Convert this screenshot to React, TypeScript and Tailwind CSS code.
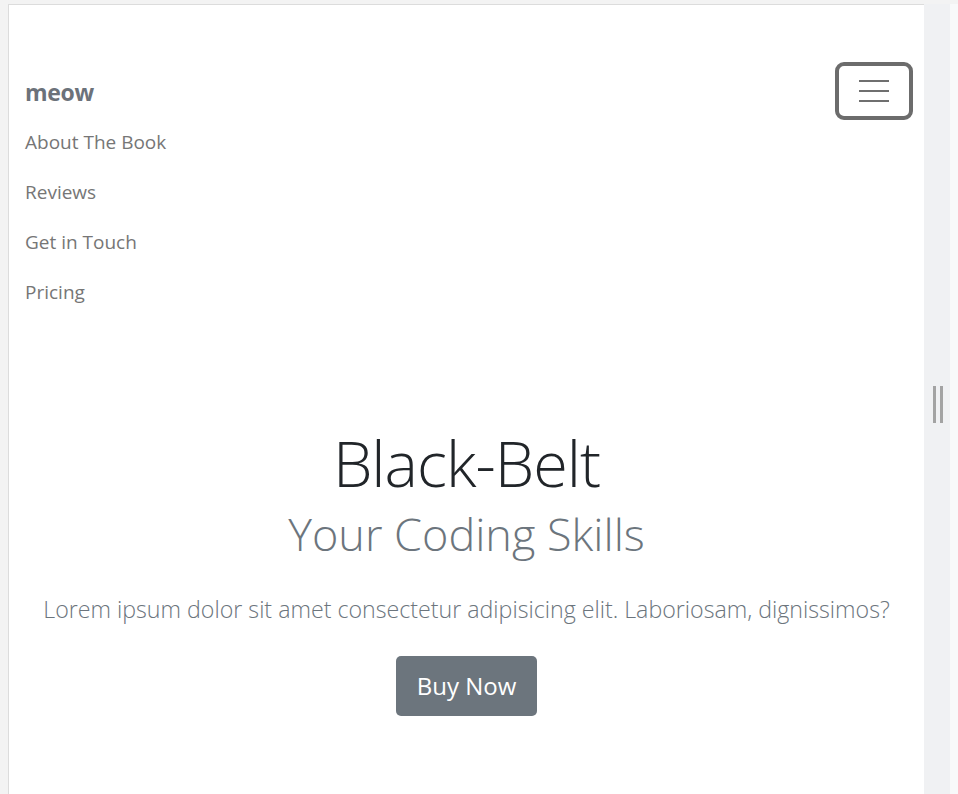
import { useState } from "react";

const links = ["About The Book", "Reviews", "Get in Touch", "Pricing"];

function Toggler() {
  return (
    <button className="flex h-[58px] w-[78px] items-center justify-center rounded-[9px] border-[4px] border-[#6c6c6c] bg-white">
      <span className="flex w-[30px] flex-col gap-[8px]">
        <span className="h-[2px] w-full bg-[#6f6f6f]" />
        <span className="h-[2px] w-full bg-[#6f6f6f]" />
        <span className="h-[2px] w-full bg-[#6f6f6f]" />
      </span>
    </button>
  );
}

export default function App() {
  const [open] = useState(true);

  return (
    <div className="flex h-[794px] overflow-hidden bg-[#f3f3f3] pl-2 pt-1 font-['Open_Sans',sans-serif]">
      <div className="flex flex-1 flex-col border-l border-t border-[#dcdcdc] bg-white">
        <nav className="pl-4 pr-[11px] pt-[57px]">
          <div className="flex items-center justify-between">
            <a className="mt-[2px] text-[23px] font-bold tracking-[-0.3px] text-[#6c727a]">meow</a>
            <Toggler />
          </div>
          {open && (
            <ul className="mt-[-3px] flex flex-col">
              {links.map((l) => (
                <li key={l} className="flex h-[50px] items-center">
                  <a className="text-[19px] text-[#767676]">{l}</a>
                </li>
              ))}
            </ul>
          )}
        </nav>

        <section className="mt-[106px] flex flex-col items-center text-center">
          <h1 className="text-[63px] font-light leading-[80px] tracking-[-1px] text-[#212529]">
            Black-Belt
          </h1>
          <h2 className="mt-[1px] text-[45px] font-light leading-[60px] text-[#6c757d]">
            Your Coding Skills
          </h2>
          <p className="mt-[28px] text-[23.2px] font-light text-[#6c757d]">
            Lorem ipsum dolor sit amet consectetur adipisicing elit. Laboriosam, dignissimos?
          </p>
          <button className="mt-[29px] h-[60px] w-[141px] rounded-[5px] bg-[#6c757d] text-[24px] text-white">
            Buy Now
          </button>
        </section>
      </div>

      <div className="flex w-[26px] items-center bg-[#f0f1f3] pl-[9px] pt-[11px]">
        <div className="flex gap-[4px]">
          <span className="h-[37px] w-[3px] bg-[#a3a3a3]" />
          <span className="h-[37px] w-[3px] bg-[#a3a3a3]" />
        </div>
      </div>
      <div className="w-[8px] bg-[#f8f9fa]" />
    </div>
  );
}
